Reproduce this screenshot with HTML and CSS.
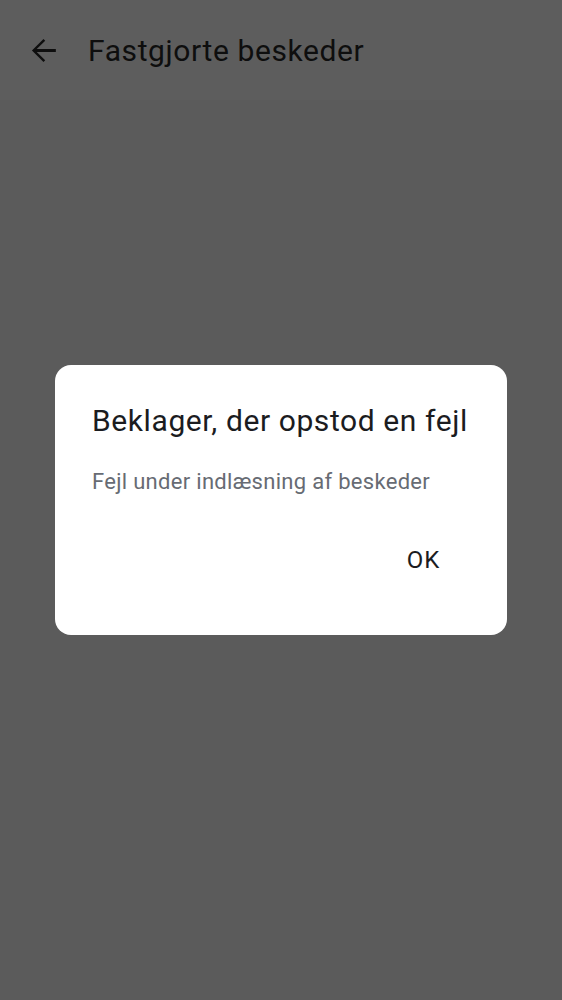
FILE: index.html
```html
<!DOCTYPE html>
<html lang="da">
<head>
<meta charset="utf-8">
<link rel="stylesheet" href="styles.css">
</head>
<body>
<div class="screen">
  <header class="appbar">
    <svg class="back" width="37" height="37" viewBox="0 0 24 24"><path d="M20 11.1H7.6l5.5-5.5L12 4.5 4.5 12l7.5 7.5 1.1-1.1-5.5-5.5H20z" fill="#0e0e0e"/></svg>
    <h1 class="title">Fastgjorte beskeder</h1>
  </header>
  <main class="content">
    <div class="dialog">
      <h2 class="dtitle">Beklager, der opstod en fejl</h2>
      <p class="dbody">Fejl under indlæsning af beskeder</p>
      <div class="actions"><span class="ok">OK</span></div>
    </div>
  </main>
</div>
</body>
</html>
```
FILE: styles.css
```css
* { box-sizing: border-box; }
html, body { margin: 0; padding: 0; }
body { background: #5b5b5b; font-family: Roboto, "Noto Sans", sans-serif; }
.screen { width: 562px; height: 1000px; display: flex; flex-direction: column; background: #5b5b5b; }
.appbar { height: 100px; display: flex; align-items: center; padding-left: 25px; background: #5d5d5d; }
.back { display: block; margin-right: 26px; }
.title { margin: 0; font-size: 30px; font-weight: 400; color: #0e0e0e; letter-spacing: 0.6px; }
.content { flex: 1; display: flex; justify-content: center; padding-top: 265px; }
.dialog { width: 452px; height: 270px; background: #fff; border-radius: 16px; padding: 38px 37px 0 37px; align-self: flex-start; }
.dtitle { margin: 0; font-size: 30px; font-weight: 400; color: #1b1c1f; line-height: 36px; letter-spacing: 0.6px; white-space: nowrap; }
.dbody { margin: 29px 0 0; font-size: 22px; color: #676b73; line-height: 28px; letter-spacing: 0.3px; }
.actions { display: flex; justify-content: flex-end; margin-top: 49px; padding-right: 30px; }
.ok { font-size: 24px; font-weight: 400; color: #1b1c1f; line-height: 30px; letter-spacing: 0.8px; }
```
